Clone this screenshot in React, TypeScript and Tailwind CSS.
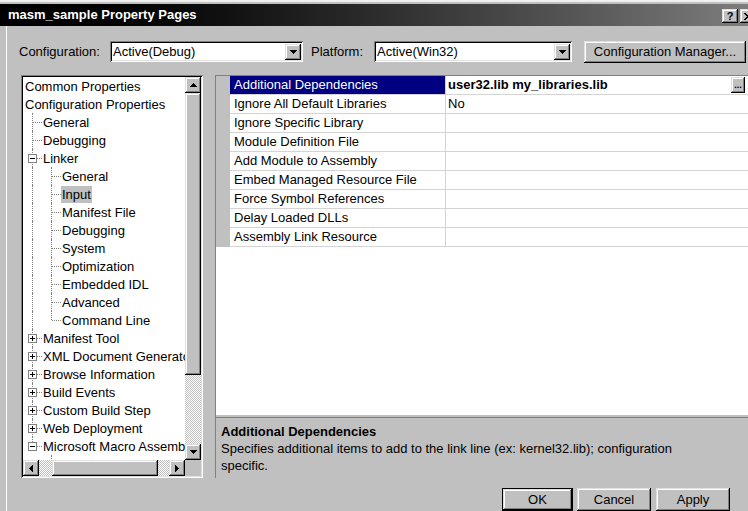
import React from "react";

// classic 3D bevels
const raised =
  "shadow-[inset_-1px_-1px_#000,inset_1px_1px_#dfdfdf,inset_-2px_-2px_#808080,inset_2px_2px_#fff]";
const sunken =
  "shadow-[inset_1px_1px_#808080,inset_-1px_-1px_#fff,inset_2px_2px_#000,inset_-2px_-2px_#dfdfdf]";
const dither =
  "bg-[repeating-conic-gradient(#ffffff_0_25%,#c0c0c0_0_50%)] [background-size:2px_2px]";

type Dir = "up" | "down" | "left" | "right";

function Tri({ dir }: { dir: Dir }) {
  const horiz = dir === "left" || dir === "right";
  const pts = {
    up: "3.5,0 7,4 0,4",
    down: "0,0 7,0 3.5,4",
    left: "4,0 4,7 0,3.5",
    right: "0,0 4,3.5 0,7",
  }[dir];
  return (
    <svg
      width={horiz ? 4 : 7}
      height={horiz ? 7 : 4}
      viewBox={horiz ? "0 0 4 7" : "0 0 7 4"}
      shapeRendering="crispEdges"
    >
      <polygon points={pts} fill="#000" />
    </svg>
  );
}

function ScrollBtn({ dir }: { dir: Dir }) {
  return (
    <div
      className={`flex h-[16px] w-[16px] shrink-0 items-center justify-center bg-[#c0c0c0] ${raised}`}
    >
      <Tri dir={dir} />
    </div>
  );
}

function Combo({ value, className }: { value: string; className: string }) {
  return (
    <div className={`flex h-[21px] items-center bg-white p-[2px] ${sunken} ${className}`}>
      <span className="flex-1 pl-[1px] leading-[17px]">{value}</span>
      <ScrollBtn dir="down" />
    </div>
  );
}

// tree guide column: "|" pass-through, "├" branch, "└" last branch, " " empty
function Guide({ g, box }: { g: string; box?: "plus" | "minus" }) {
  return (
    <div className="relative h-[18px] w-[19px] shrink-0">
      {g !== " " && (
        <div
          className={`absolute left-[9px] top-0 border-l border-dotted border-[#808080] ${
            g === "└" ? "h-[9px]" : "h-[18px]"
          }`}
        />
      )}
      {(g === "├" || g === "└") && (
        <div className="absolute left-[10px] right-0 top-[9px] border-t border-dotted border-[#808080]" />
      )}
      {box && (
        <div className="absolute left-[5px] top-[5px] flex h-[9px] w-[9px] items-center justify-center border border-[#808080] bg-white">
          <div className="h-px w-[5px] bg-black" />
          {box === "plus" && <div className="absolute h-[5px] w-px bg-black" />}
        </div>
      )}
    </div>
  );
}

type TreeRow = { label: string; guides: string[]; box?: "plus" | "minus"; selected?: boolean };

const tree: TreeRow[] = [
  { label: "Common Properties", guides: [] },
  { label: "Configuration Properties", guides: [] },
  { label: "General", guides: ["├"] },
  { label: "Debugging", guides: ["├"] },
  { label: "Linker", guides: ["├"], box: "minus" },
  { label: "General", guides: ["|", "├"] },
  { label: "Input", guides: ["|", "├"], selected: true },
  { label: "Manifest File", guides: ["|", "├"] },
  { label: "Debugging", guides: ["|", "├"] },
  { label: "System", guides: ["|", "├"] },
  { label: "Optimization", guides: ["|", "├"] },
  { label: "Embedded IDL", guides: ["|", "├"] },
  { label: "Advanced", guides: ["|", "├"] },
  { label: "Command Line", guides: ["|", "└"] },
  { label: "Manifest Tool", guides: ["├"], box: "plus" },
  { label: "XML Document Generator", guides: ["├"], box: "plus" },
  { label: "Browse Information", guides: ["├"], box: "plus" },
  { label: "Build Events", guides: ["├"], box: "plus" },
  { label: "Custom Build Step", guides: ["├"], box: "plus" },
  { label: "Web Deployment", guides: ["├"], box: "plus" },
  { label: "Microsoft Macro Assembler", guides: ["└"], box: "minus" },
  { label: "General", guides: [" ", "├"] },
];

const props: [string, string][] = [
  ["Additional Dependencies", "user32.lib my_libraries.lib"],
  ["Ignore All Default Libraries", "No"],
  ["Ignore Specific Library", ""],
  ["Module Definition File", ""],
  ["Add Module to Assembly", ""],
  ["Embed Managed Resource File", ""],
  ["Force Symbol References", ""],
  ["Delay Loaded DLLs", ""],
  ["Assembly Link Resource", ""],
];

function Tree() {
  return (
    <div className={`flex h-[403px] w-[182px] shrink-0 flex-col bg-[#c0c0c0] p-[2px] ${sunken}`}>
      <div className="flex min-h-0 flex-1">
        <div className="min-w-0 flex-1 overflow-hidden bg-white">
          {tree.map((r, i) => (
            <div
              key={i}
              className={`flex h-[18px] items-center whitespace-nowrap ${
                r.guides.length === 0 ? "pl-[1px]" : ""
              }`}
            >
              {r.guides.map((g, j) => (
                <Guide key={j} g={g} box={j === r.guides.length - 1 ? r.box : undefined} />
              ))}
              <span className={`px-[1px] leading-[17px] ${r.selected ? "bg-[#c0c0c0]" : ""}`}>
                {r.label}
              </span>
            </div>
          ))}
        </div>
        <div className="flex w-[16px] flex-col">
          <ScrollBtn dir="up" />
          <div className={`h-[282px] shrink-0 bg-[#c0c0c0] ${raised}`} />
          <div className={`flex-1 ${dither}`} />
          <ScrollBtn dir="down" />
        </div>
      </div>
      <div className="flex h-[16px]">
        <ScrollBtn dir="left" />
        <div className={`w-[13px] ${dither}`} />
        <div className={`w-[106px] bg-[#c0c0c0] ${raised}`} />
        <div className={`flex-1 ${dither}`} />
        <ScrollBtn dir="right" />
        <div className="w-[16px] bg-[#c0c0c0]" />
      </div>
    </div>
  );
}

function PropertyGrid() {
  return (
    <div className="h-[340px] border-t border-[#808080] bg-white">
      {props.map(([name, value], i) => (
        <div key={name} className="flex h-[19px]">
          <div className="w-[14px] shrink-0 bg-[#c0c0c0]" />
          <div
            className={`flex w-[216px] shrink-0 items-center whitespace-nowrap border-b border-r border-[#d4d4d4] pl-[4px] ${
              i === 0 ? "bg-[#000080] text-white" : ""
            }`}
          >
            {name}
          </div>
          <div className="flex flex-1 items-center justify-between border-b border-[#d4d4d4] pl-[2px]">
            <span className={i === 0 ? "font-bold" : ""}>{value}</span>
            {i === 0 && (
              <div
                className={`mr-[3px] flex h-[16px] w-[14px] items-end justify-center bg-[#c0c0c0] pb-[3px] text-[9px] font-bold leading-none ${raised}`}
              >
                ...
              </div>
            )}
          </div>
        </div>
      ))}
    </div>
  );
}

export default function App() {
  return (
    <div className="relative h-[511px] w-[748px] overflow-hidden bg-[#c0c0c0] font-['Liberation_Sans',Arial,sans-serif] text-[13px] text-black">
      <div className="h-[4px] border-t-2 border-[#f0f0f0]" />

      {/* title bar */}
      <div className="flex h-[22px] w-[760px] items-center bg-linear-to-r from-black to-[#808080] pl-[8px]">
        <span className="flex-1 font-bold text-white">masm_sample Property Pages</span>
        <div className="mt-[2px] flex gap-[2px] pr-[4px]">
          <div
            className={`flex h-[14px] w-[16px] items-center justify-center bg-[#c0c0c0] text-[11px] font-bold leading-none ${raised}`}
          >
            ?
          </div>
          <div className={`flex h-[14px] w-[16px] items-center justify-center bg-[#c0c0c0] ${raised}`}>
            <svg width="8" height="7" viewBox="0 0 8 7" shapeRendering="crispEdges">
              <path d="M0 0h2l2 2.5L6 0h2L5 3.5 8 7H6L4 4.5 2 7H0l3-3.5z" fill="#000" />
            </svg>
          </div>
        </div>
      </div>

      <div className="ml-[6px] flex h-[485px] flex-col border-l border-white">
        {/* configuration / platform */}
        <div className="mt-[15px] flex h-[21px] items-center pl-[12px]">
          <span className="w-[91px] shrink-0">Configuration:</span>
          <Combo value="Active(Debug)" className="w-[193px] shrink-0" />
          <span className="ml-[8px] w-[63px] shrink-0">Platform:</span>
          <Combo value="Active(Win32)" className="w-[198px] shrink-0" />
          <div
            className={`ml-[12px] flex h-[22px] w-[162px] shrink-0 items-center justify-center bg-[#c0c0c0] ${raised}`}
          >
            Configuration Manager...
          </div>
        </div>

        <div className="mt-[13px] flex pl-[14px]">
          <Tree />
          <div className="ml-[12px] flex h-[403px] w-[533px] shrink-0 flex-col border-l border-[#808080]">
            <PropertyGrid />
            <div className="mt-[2px] flex-1 border-t border-[#808080] pl-[5px] pt-[5px] leading-[17px]">
              <div className="font-bold">Additional Dependencies</div>
              <div>
                Specifies additional items to add to the link line (ex: kernel32.lib); configuration
                <br />
                specific.
              </div>
            </div>
          </div>
        </div>

        {/* dialog buttons */}
        <div className="mt-[10px] flex justify-end pr-[18px]">
          <div
            className={`flex h-[23px] w-[71px] items-center justify-center border border-black bg-[#c0c0c0] ${raised}`}
          >
            OK
          </div>
          <div
            className={`ml-[4px] flex h-[23px] w-[74px] items-center justify-center bg-[#c0c0c0] ${raised}`}
          >
            Cancel
          </div>
          <div
            className={`ml-[5px] flex h-[23px] w-[74px] items-center justify-center bg-[#c0c0c0] ${raised}`}
          >
            Apply
          </div>
        </div>
      </div>
    </div>
  );
}
